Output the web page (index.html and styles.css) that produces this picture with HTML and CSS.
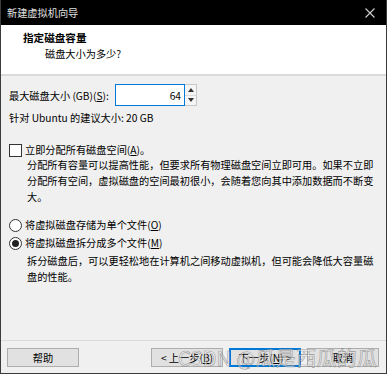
FILE: index.html
```html
<!DOCTYPE html>
<html lang="zh-CN">
<head>
  <meta charset="UTF-8" />
  <title>新建虚拟机向导</title>
  <link rel="stylesheet" href="styles.css">
</head>
<body>

  <div class="window">

    <!-- Title bar -->
    <div class="titlebar">
      <span class="title">新建虚拟机向导</span>
      <svg class="close" width="10" height="10" viewBox="0 0 10 10">
        <path d="M0.5 0.5 L9.5 9.5 M9.5 0.5 L0.5 9.5" stroke="#d0d0d0" stroke-width="1.1" fill="none"/>
      </svg>
    </div>

    <!-- Wizard header -->
    <div class="header">
      <div class="header-title">指定磁盘容量</div>
      <div class="header-sub">磁盘大小为多少?</div>
    </div>

    <div class="content">
      <div class="size-row">
        <label for="disk-size">最大磁盘大小 (GB)(<u>S</u>):</label>
        <div class="spin">
          <input type="text" id="disk-size" value="64">
          <div class="spin-btns">
            <span class="spin-btn"><i class="arrow-up"></i></span>
            <span class="spin-btn"><i class="arrow-down"></i></span>
          </div>
        </div>
      </div>

      <div class="hint">针对 Ubuntu 的建议大小: 20 GB</div>

      <div class="option option-check">
        <span class="checkbox"></span>
        <span>立即分配所有磁盘空间(<u>A</u>)。</span>
      </div>
      <p class="desc">分配所有容量可以提高性能，但要求所有物理磁盘空间立即可用。如果不立即<br>分配所有空间，虚拟磁盘的空间最初很小，会随着您向其中添加数据而不断变<br>大。</p>

      <div class="option option-radio first">
        <span class="radio"></span>
        <span>将虚拟磁盘存储为单个文件(<u>O</u>)</span>
      </div>
      <div class="option option-radio">
        <span class="radio checked"></span>
        <span>将虚拟磁盘拆分成多个文件(<u>M</u>)</span>
      </div>
      <p class="desc">拆分磁盘后，可以更轻松地在计算机之间移动虚拟机，但可能会降低大容量磁<br>盘的性能。</p>
    </div>

    <!-- Buttons -->
    <div class="footer">
      <button class="btn">帮助</button>
      <div class="footer-right">
        <button class="btn">&lt; 上一步(<u>B</u>)</button>
        <button class="btn btn-focus">下一步(<u>N</u>) &gt;</button>
        <button class="btn">取消</button>
      </div>
    </div>

    <div class="watermark">CSDN @瓜是西瓜的瓜</div>
  </div>

</body>
</html>
```

FILE: styles.css
```css
:root {
  --face: #f0f0f0;
  --border: #3c3c3c;
  --accent: #0078d7;
}

body {
  margin: 0;
  padding: 0;
  font-family: "Noto Sans CJK SC", "Noto Sans", sans-serif;
  font-size: 10.2px;
  color: #000;
  background: #fff;
}

.window {
  position: relative;
  width: 387px;
  height: 374px;
  box-sizing: border-box;
  border: 1px solid var(--border);
  border-top: none;
  background: var(--face);
  display: flex;
  flex-direction: column;
  overflow: hidden;
}

.titlebar {
  height: 25px;
  margin: 0 -1px;
  background: #000;
  color: #e0e0e0;
  display: flex;
  align-items: center;
  justify-content: space-between;
  padding: 0 12px 0 7px;
}

.header {
  background: #fff;
  border-bottom: 2px solid #dadada;
  box-sizing: border-box;
  height: 51px;
  padding-top: 6px;
}

.header-title {
  font-weight: bold;
  font-size: 10.6px;
  margin-left: 22px;
  line-height: 14px;
}

.header-sub {
  margin-left: 44px;
  margin-top: 2px;
  line-height: 14px;
}

.content {
  flex: 1;
  padding: 8px 8px 0 8px;
}

.size-row {
  display: flex;
  align-items: center;
  height: 22px;
}

.size-row label {
  width: 106px;
}

.spin {
  display: flex;
  height: 22px;
}

.spin input {
  width: 70px;
  height: 22px;
  box-sizing: border-box;
  border: 1px solid var(--accent);
  font: inherit;
  text-align: right;
  padding: 0 3px;
  outline: none;
}

.spin-btns {
  display: flex;
  flex-direction: column;
  width: 12px;
  border: 1px solid #c8c8c8;
  border-left: none;
  box-sizing: border-box;
  background: #f5f5f5;
}

.spin-btn {
  flex: 1;
  display: flex;
  align-items: center;
  justify-content: center;
}

.spin-btn + .spin-btn {
  border-top: 1px solid #dadada;
}

.arrow-up,
.arrow-down {
  width: 0;
  height: 0;
  border-left: 3px solid transparent;
  border-right: 3px solid transparent;
}

.arrow-up {
  border-bottom: 4px solid #333;
}

.arrow-down {
  border-top: 4px solid #333;
}

.hint {
  margin-top: 6px;
  line-height: 12px;
}

.option {
  display: flex;
  align-items: center;
  gap: 3px;
  line-height: 14px;
}

.option-check {
  margin-top: 19px;
}

.option-radio.first {
  margin-top: 13px;
}

.option-radio + .option-radio {
  margin-top: 4px;
}

.checkbox {
  width: 13px;
  height: 13px;
  box-sizing: border-box;
  border: 1px solid #333;
  background: #fff;
}

.radio {
  width: 13px;
  height: 13px;
  box-sizing: border-box;
  border: 1px solid #333;
  border-radius: 50%;
  background: #fff;
  display: flex;
  align-items: center;
  justify-content: center;
}

.radio.checked::after {
  content: "";
  width: 7px;
  height: 7px;
  border-radius: 50%;
  background: #222;
}

.desc {
  width: 352px;
  margin: 0 0 0 18px;
  line-height: 16px;
  white-space: nowrap;
}

.option-radio + .desc {
  margin-top: 3px;
}

.footer {
  height: 33px;
  border-top: 1px solid #dadada;
  display: flex;
  justify-content: space-between;
  padding: 7px 7px 0 6px;
  box-sizing: border-box;
}

.footer-right {
  display: flex;
  gap: 6px;
}

.btn {
  width: 72px;
  height: 19px;
  box-sizing: border-box;
  background: #e1e1e1;
  border: 1px solid #adadad;
  font: inherit;
  color: #000;
  padding: 0;
}

.btn-focus {
  border: 2px solid var(--accent);
}

.watermark {
  position: absolute;
  left: 177px;
  top: 343px;
  font-size: 20px;
  letter-spacing: 0.3px;
  color: rgba(255, 255, 255, 0.55);
  -webkit-text-stroke: 0.6px rgba(90, 90, 90, 0.6);
  white-space: nowrap;
  pointer-events: none;
}
```
